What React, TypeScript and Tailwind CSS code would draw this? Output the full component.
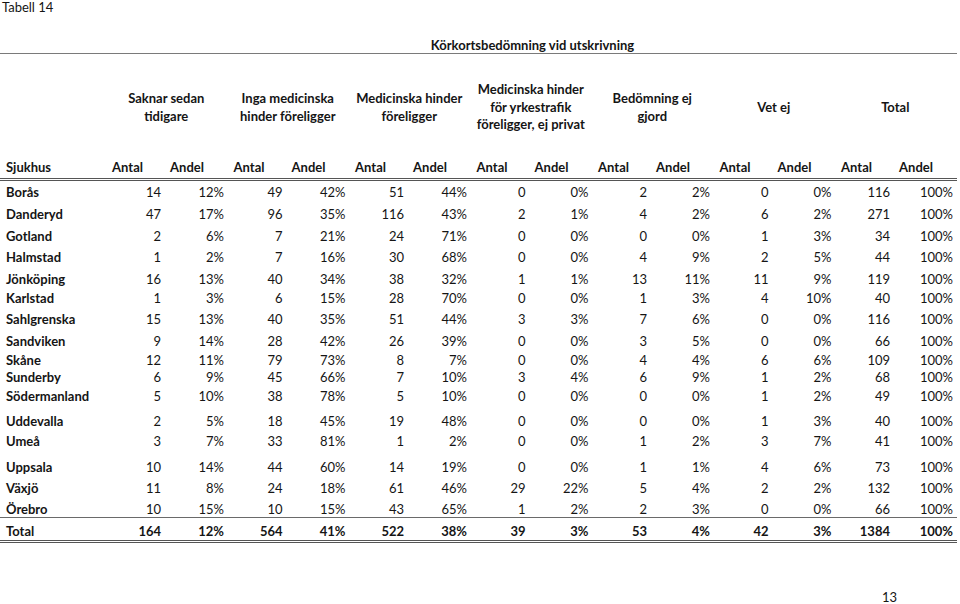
import React from "react";

type Row = { name: string; v: (string | number)[]; h: string };

const rows: Row[] = [
  { name: "Borås", v: [14, "12%", 49, "42%", 51, "44%", 0, "0%", 2, "2%", 0, "0%", 116, "100%"], h: "h-[22px]" },
  { name: "Danderyd", v: [47, "17%", 96, "35%", 116, "43%", 2, "1%", 4, "2%", 6, "2%", 271, "100%"], h: "h-[22px]" },
  { name: "Gotland", v: [2, "6%", 7, "21%", 24, "71%", 0, "0%", 0, "0%", 1, "3%", 34, "100%"], h: "h-[21px]" },
  { name: "Halmstad", v: [1, "2%", 7, "16%", 30, "68%", 0, "0%", 4, "9%", 2, "5%", 44, "100%"], h: "h-[22px]" },
  { name: "Jönköping", v: [16, "13%", 40, "34%", 38, "32%", 1, "1%", 13, "11%", 11, "9%", 119, "100%"], h: "h-[19px]" },
  { name: "Karlstad", v: [1, "3%", 6, "15%", 28, "70%", 0, "0%", 1, "3%", 4, "10%", 40, "100%"], h: "h-[21px]" },
  { name: "Sahlgrenska", v: [15, "13%", 40, "35%", 51, "44%", 3, "3%", 7, "6%", 0, "0%", 116, "100%"], h: "h-[22px]" },
  { name: "Sandviken", v: [9, "14%", 28, "42%", 26, "39%", 0, "0%", 3, "5%", 0, "0%", 66, "100%"], h: "h-[19px]" },
  { name: "Skåne", v: [12, "11%", 79, "73%", 8, "7%", 0, "0%", 4, "4%", 6, "6%", 109, "100%"], h: "h-[17px]" },
  { name: "Sunderby", v: [6, "9%", 45, "66%", 7, "10%", 3, "4%", 6, "9%", 1, "2%", 68, "100%"], h: "h-[19px]" },
  { name: "Södermanland", v: [5, "10%", 38, "78%", 5, "10%", 0, "0%", 0, "0%", 1, "2%", 49, "100%"], h: "h-[25px]" },
  { name: "Uddevalla", v: [2, "5%", 18, "45%", 19, "48%", 0, "0%", 0, "0%", 1, "3%", 40, "100%"], h: "h-[20px]" },
  { name: "Umeå", v: [3, "7%", 33, "81%", 1, "2%", 0, "0%", 1, "2%", 3, "7%", 41, "100%"], h: "h-[26px]" },
  { name: "Uppsala", v: [10, "14%", 44, "60%", 14, "19%", 0, "0%", 1, "1%", 4, "6%", 73, "100%"], h: "h-[21px]" },
  { name: "Växjö", v: [11, "8%", 24, "18%", 61, "46%", 29, "22%", 5, "4%", 2, "2%", 132, "100%"], h: "h-[21px]" },
  { name: "Örebro", v: [10, "15%", 10, "15%", 43, "65%", 1, "2%", 2, "3%", 0, "0%", 66, "100%"], h: "h-[20px]" },
];

const total = [164, "12%", 564, "41%", 522, "38%", 39, "3%", 53, "4%", 42, "3%", 1384, "100%"];

const groups: string[][] = [
  ["Saknar sedan", "tidigare"],
  ["Inga medicinska", "hinder föreligger"],
  ["Medicinska hinder", "föreligger"],
  ["Medicinska hinder", "för yrkestrafik", "föreligger, ej privat"],
  ["Bedömning ej", "gjord"],
  ["Vet ej"],
  ["Total"],
];

const cols = "grid grid-cols-[105.5px_repeat(7,58.5px_63px)]";

function ValueCells({ v, bold }: { v: (string | number)[]; bold?: boolean }) {
  return (
    <>
      {v.map((x, i) => (
        <div key={i} className={`text-right pr-[3px] ${bold ? "font-bold" : ""}`}>
          {x}
        </div>
      ))}
    </>
  );
}

export default function App() {
  return (
    <div
      className="w-[960px] h-[604px] bg-white text-[#151515] overflow-hidden text-[13px]"
      style={{ fontFamily: "Lato, 'Open Sans', sans-serif" }}
    >
      <div className="pl-[2px] leading-[15px] h-[14px]">Tabell 14</div>
      <div className="w-[957px]">
        <div className="h-[40px] flex items-end justify-center border-b border-[#7a7a7a] pl-[108px]">
          <div className="font-bold leading-[16px]">Körkortsbedömning vid utskrivning</div>
        </div>
        <div className={`${cols} h-[103px] pt-[4px] items-center font-bold leading-[17.5px]`}>
          <div />
          {groups.map((g, i) => (
            <div key={i} className="col-span-2 text-center">
              {g.map((l, j) => (
                <div key={j}>{l}</div>
              ))}
            </div>
          ))}
        </div>
        <div className={`${cols} h-[24px] leading-[21px] font-bold border-b-[3px] border-double border-[#555]`}>
          <div className="pl-[6px]">Sjukhus</div>
          {Array.from({ length: 7 }).map((_, i) => (
            <React.Fragment key={i}>
              <div className="text-right pr-[21px]">Antal</div>
              <div className="text-right pr-[23px]">Andel</div>
            </React.Fragment>
          ))}
        </div>
        {rows.map((r, i) => (
          <div
            key={r.name}
            className={`${cols} ${r.h} leading-[23px] ${i === rows.length - 1 ? "border-b border-[#6a6a6a]" : ""}`}
          >
            <div className="pl-[6px] font-bold">{r.name}</div>
            <ValueCells v={r.v} />
          </div>
        ))}
        <div className={`${cols} h-[25px] leading-[27px] border-b-[3px] border-double border-[#555]`}>
          <div className="pl-[6px] font-bold">Total</div>
          <ValueCells v={total} bold />
        </div>
      </div>
      <div className="flex justify-end pr-[63px] mt-[45px] leading-[18px]">13</div>
    </div>
  );
}
